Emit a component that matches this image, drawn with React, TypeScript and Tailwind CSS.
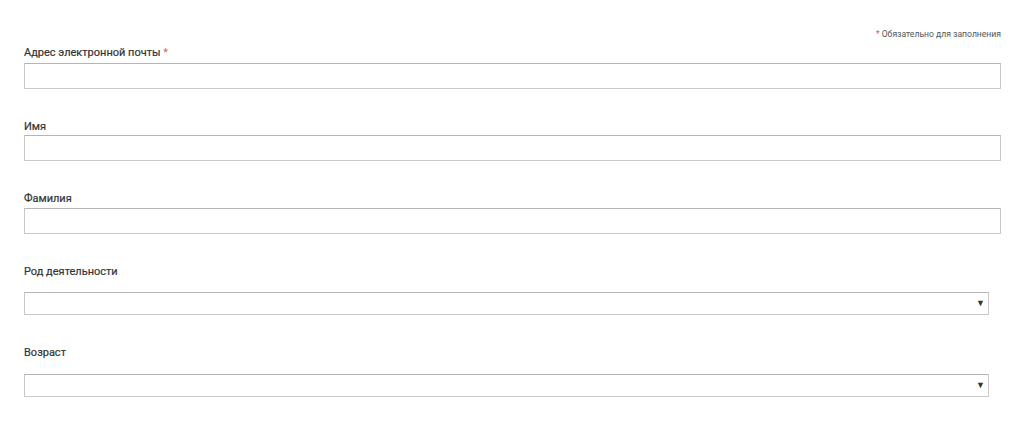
const labelCls = "block text-[11px] leading-[14px] font-normal text-[#333] [-webkit-text-stroke:0.2px_#333]";
const inputCls = "block w-full h-[26px] border border-[#c8c8c8] border-t-[#b5b5b5] outline-none";
const selectCls = "w-[965px] h-[23px] border border-[#c8c8c8] border-t-[#b5b5b5] flex items-center justify-end pr-[3px]";

export default function App() {
  const font = { fontFamily: "Roboto, 'Liberation Sans', sans-serif" };
  return (
    <div className="w-[1024px] h-[424px] bg-white overflow-hidden pl-[24px] pr-[23px]" style={font}>
      <div className="pt-[28px] text-right text-[8.6px] leading-[12px] text-[#555]">
        <span className="text-[#e8584e]">*</span> Обязательно для заполнения
      </div>

      <label className={`${labelCls} mt-[6px]`}>
        Адрес электронной почты <span className="text-[#e8584e] [-webkit-text-stroke:0]">*</span>
      </label>
      <input type="text" className={`${inputCls} mt-[3px]`} />

      <label className={`${labelCls} mt-[31px]`}>Имя</label>
      <input type="text" className={`${inputCls} mt-[1px]`} />

      <label className={`${labelCls} mt-[31px]`}>Фамилия</label>
      <input type="text" className={`${inputCls} mt-[2px]`} />

      <label className={`${labelCls} mt-[31px]`}>Род деятельности</label>
      <div className={`${selectCls} mt-[13px]`}>
        <span className="text-[9px] text-[#333]">▼</span>
      </div>

      <label className={`${labelCls} mt-[31px]`}>Возраст</label>
      <div className={`${selectCls} mt-[14px]`}>
        <span className="text-[9px] text-[#333]">▼</span>
      </div>
    </div>
  );
}
